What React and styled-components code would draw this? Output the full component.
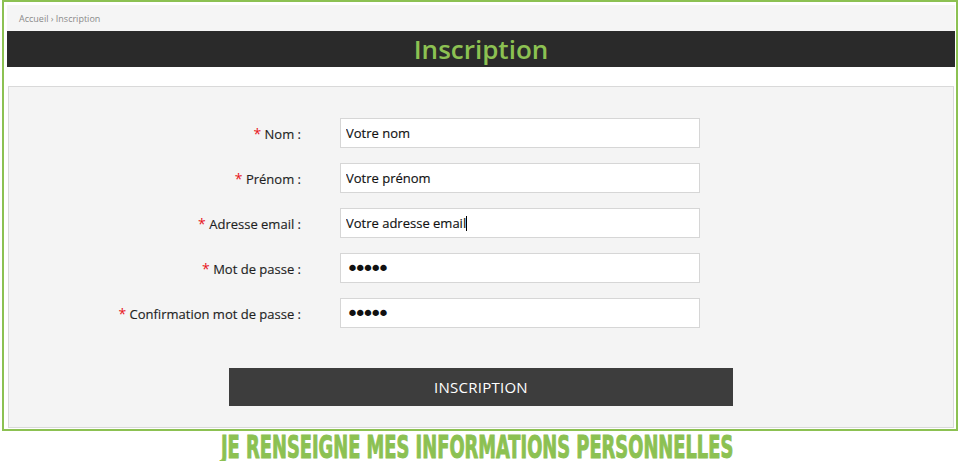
import React from "react";
import styled, { createGlobalStyle } from "styled-components";

const GREEN = "#8cc152";

const Global = createGlobalStyle`
  html, body { margin: 0; padding: 0; background: #fff; overflow: hidden; }
  body { font-family: "Open Sans", "Liberation Sans", sans-serif; }
  * { box-sizing: border-box; }
`;

const Page = styled.div`
  width: 961px;
  height: 461px;
  padding-left: 2px;
`;

const Frame = styled.div`
  width: 956px;
  border: 2px solid ${GREEN};
  padding: 3px 1px 1px 3px;
  background: #fff;
`;

const Breadcrumb = styled.div`
  height: 26px;
  background: #f5f5f5;
  padding-left: 12px;
  display: flex;
  align-items: center;
  font-size: 9px;
  color: #8a8a8a;
`;

const TitleBar = styled.h1`
  margin: 0;
  height: 36px;
  background: #2a2a2a;
  color: ${GREEN};
  font-size: 26px;
  font-weight: 600;
  line-height: 36px;
  text-align: center;
`;

const Panel = styled.form`
  margin: 19px 1px 0 1px;
  border: 1px solid #d9d9d9;
  background: #f4f4f4;
  padding: 31px 0 21px;
  display: flex;
  flex-direction: column;
  align-items: center;
`;

const Grid = styled.div`
  align-self: stretch;
  display: grid;
  grid-template-columns: 292px 360px;
  column-gap: 39px;
  row-gap: 15px;
  align-items: center;
`;

const Label = styled.label`
  text-align: right;
  font-size: 13px;
  color: #1f1f1f;
  -webkit-text-stroke: 0.15px #1f1f1f;
`;

const Star = styled.span`
  color: #e8141c;
  font-size: 14px;
  -webkit-text-stroke: 0;
`;

const FieldWrap = styled.div`
  position: relative;
  height: 30px;
`;

const Input = styled.input`
  width: 360px;
  height: 30px;
  border: 1px solid #d6d6d6;
  background: #fff;
  padding: 0 0 0 5px;
  font-family: ${(p) =>
    p.type === "password" ? `"DejaVu Sans", sans-serif` : `"Open Sans", "Liberation Sans", sans-serif`};
  font-size: ${(p) => (p.type === "password" ? "22px" : "13px")};
  letter-spacing: ${(p) => (p.type === "password" ? "-5.2px" : "0")};
  color: #111;
  outline: none;
  -webkit-text-stroke: ${(p) => (p.type === "password" ? "0" : "0.15px #111")};
`;

const Mirror = styled.div`
  position: absolute;
  left: 6px;
  top: 0;
  height: 30px;
  display: flex;
  align-items: center;
  font-size: 13px;
  pointer-events: none;
`;

const Ghost = styled.span`
  color: transparent;
`;

const Caret = styled.span`
  display: inline-block;
  width: 1px;
  height: 15px;
  background: #000;
`;

const Button = styled.button`
  margin-top: 40px;
  width: 504px;
  height: 38px;
  border: none;
  background: #3d3d3d;
  color: #fff;
  font-family: "Open Sans", "Liberation Sans", sans-serif;
  font-size: 15px;
  letter-spacing: 0.25px;
`;

const Footer = styled.div`
  height: 28px;
  display: flex;
  justify-content: center;
  padding-right: 8px;
`;

const Slogan = styled.div`
  display: inline-block;
  font-family: "Liberation Sans Narrow", "DejaVu Sans Condensed", "Liberation Sans", sans-serif;
  font-weight: 700;
  font-size: 32px;
  line-height: 32px;
  height: 28px;
  color: ${GREEN};
  -webkit-text-stroke: 1px ${GREEN};
  white-space: nowrap;
  transform: scaleX(0.62);
  transform-origin: center top;
`;

const fields = [
  { label: "Nom :", value: "Votre nom", type: "text" },
  { label: "Prénom :", value: "Votre prénom", type: "text" },
  { label: "Adresse email :", value: "Votre adresse email", type: "text", caret: true },
  { label: "Mot de passe :", value: "aaaaa", type: "password" },
  { label: "Confirmation mot de passe :", value: "aaaaa", type: "password" },
];

export default function App() {
  return (
    <>
      <Global />
      <Page>
        <Frame>
          <Breadcrumb>Accueil › Inscription</Breadcrumb>
          <TitleBar>Inscription</TitleBar>
          <Panel onSubmit={(e) => e.preventDefault()}>
            <Grid>
              {fields.map((f) => (
                <React.Fragment key={f.label}>
                  <Label>
                    <Star>*</Star> {f.label}
                  </Label>
                  <FieldWrap>
                    <Input type={f.type} defaultValue={f.value} readOnly />
                    {f.caret && (
                      <Mirror aria-hidden>
                        <Ghost>{f.value}</Ghost>
                        <Caret />
                      </Mirror>
                    )}
                  </FieldWrap>
                </React.Fragment>
              ))}
            </Grid>
            <Button type="submit">INSCRIPTION</Button>
          </Panel>
        </Frame>
        <Footer>
          <Slogan>JE RENSEIGNE MES INFORMATIONS PERSONNELLES</Slogan>
        </Footer>
      </Page>
    </>
  );
}
